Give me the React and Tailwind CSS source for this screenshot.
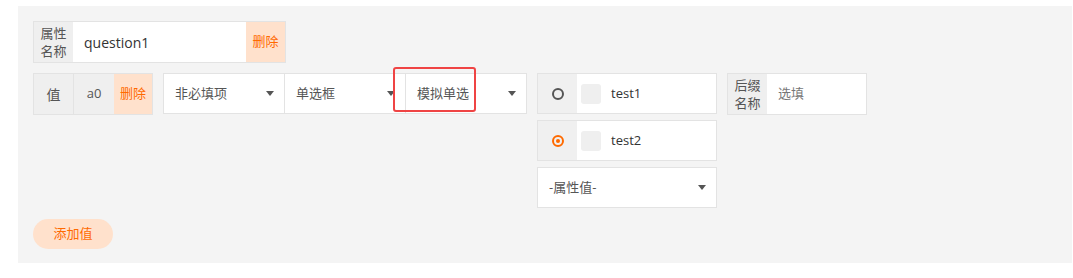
import { useState } from 'react';

const font = { fontFamily: '"Open Sans", "Noto Sans CJK SC", sans-serif' };

function Caret() {
    return <span className="w-0 h-0 border-l-[4px] border-r-[4px] border-t-[5px] border-l-transparent border-r-transparent border-t-[#555]" />;
}

function SelectBox({ label, className = '' }) {
    return (
        <div className={`h-[41px] bg-white border border-[#e3e3e3] flex items-center justify-between pl-[11px] pr-[10px] text-[13px] text-[#555] ${className}`}>
            <span>{label}</span>
            <Caret />
        </div>
    );
}

function RadioOption({ label, checked }) {
    return (
        <div className="h-[41px] w-[180px] flex bg-white border border-[#e3e3e3]">
            <div className="w-[39px] bg-[#f0f0f0] flex items-center justify-center">
                {checked ? (
                    <span className="w-[12px] h-[12px] rounded-full border-2 border-[#ff6a00] flex items-center justify-center">
                        <span className="w-[4px] h-[4px] rounded-full bg-[#ff6a00]" />
                    </span>
                ) : (
                    <span className="w-[12px] h-[12px] rounded-full border-2 border-[#555]" />
                )}
            </div>
            <div className="flex items-center pl-[4px]">
                <span className="w-[20px] h-[20px] rounded-[3px] bg-[#efefef]" />
                <span className="ml-[10px] text-[13px] text-[#333]">{label}</span>
            </div>
        </div>
    );
}

export default function App() {
    const [name, setName] = useState('question1');

    return (
        <div className="w-[1073px] h-[278px] bg-white pt-[6px] pl-[18px]" style={font}>
            <div className="w-[1054px] h-[257px] bg-[#f4f4f4] pt-[15px] pl-[15px]">
                {/* Attribute name */}
                <div className="flex h-[42px] w-[253px] border border-[#e3e3e3]">
                    <div className="w-[39px] bg-[#efefef] flex items-center justify-center text-[13px] leading-[18px] text-[#555] text-center">
                        属性<br />名称
                    </div>
                    <input
                        value={name}
                        onChange={(e) => setName(e.target.value)}
                        className="w-[173px] bg-white pl-[11px] text-[14px] text-[#333] outline-none"
                    />
                    <button className="flex-1 bg-[#ffe1cc] text-[13px] text-[#ff6a00]">删除</button>
                </div>

                {/* Value row */}
                <div className="flex items-start mt-[10px]">
                    <div className="flex h-[42px] w-[120px] border border-[#e3e3e3]">
                        <div className="w-[39px] bg-[#efefef] flex items-center justify-center text-[14px] text-[#555]">值</div>
                        <div className="w-[41px] bg-[#efefef] border-l border-[#e3e3e3] flex items-center justify-center text-[13px] text-[#555]">a0</div>
                        <button className="flex-1 bg-[#ffe1cc] text-[13px] text-[#ff6a00]">删除</button>
                    </div>

                    <div className="relative flex ml-[10px]">
                        <SelectBox label="非必填项" className="w-[122px]" />
                        <SelectBox label="单选框" className="w-[122px] -ml-px" />
                        <SelectBox label="模拟单选" className="w-[122px] -ml-px" />
                        {/* highlight annotation */}
                        <div className="absolute left-[230px] top-[-6px] w-[83px] h-[45px] border-2 border-[#ef4444] rounded-[3px] pointer-events-none" />
                    </div>

                    <div className="flex flex-col gap-[6px] ml-[10px]">
                        <RadioOption label="test1" />
                        <RadioOption label="test2" checked />
                        <SelectBox label="-属性值-" className="w-[180px]" />
                    </div>

                    <div className="flex h-[42px] w-[140px] ml-[10px] border border-[#e3e3e3]">
                        <div className="w-[39px] bg-[#efefef] flex items-center justify-center text-[13px] leading-[18px] text-[#555] text-center">
                            后缀<br />名称
                        </div>
                        <input
                            placeholder="选填"
                            className="flex-1 min-w-0 bg-white pl-[11px] text-[13px] text-[#333] placeholder:text-[#777] outline-none"
                        />
                    </div>
                </div>

                <button className="mt-[11px] w-[80px] h-[30px] rounded-full bg-[#ffe1cc] text-[13px] text-[#ff6a00]">
                    添加值
                </button>
            </div>
        </div>
    );
}
